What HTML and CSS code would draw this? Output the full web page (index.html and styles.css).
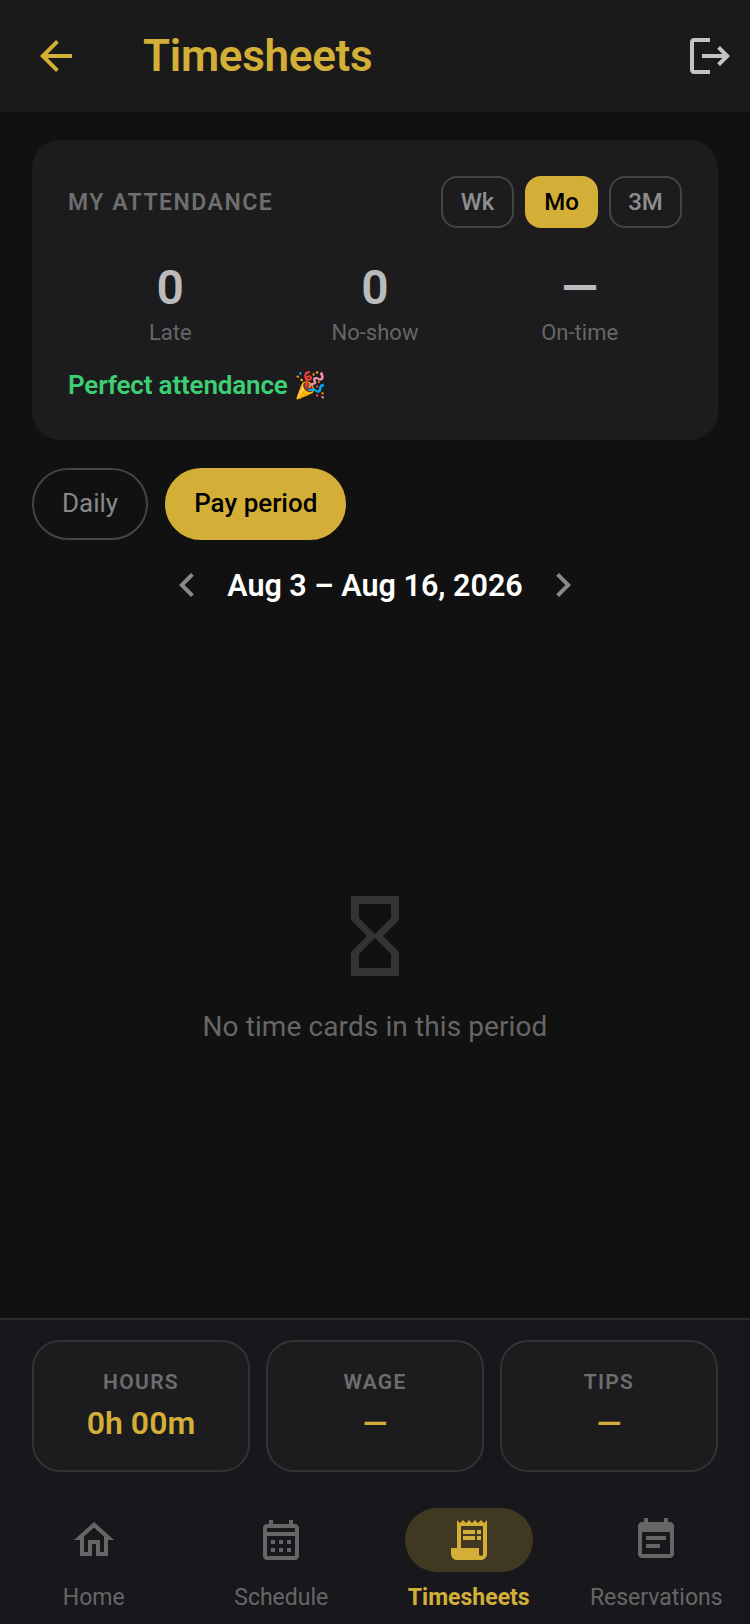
FILE: index.html
```html
<!DOCTYPE html>
<html lang="en">
<head>
<meta charset="UTF-8">
<meta name="viewport" content="width=device-width, initial-scale=1.0">
<title>Timesheets</title>
<link rel="stylesheet" href="styles.css">
</head>
<body>

<header class="topbar">
  <svg class="icon back" viewBox="0 0 24 24"><path d="M20 11H7.83l5.59-5.59L12 4l-8 8 8 8 1.41-1.41L7.83 13H20v-2z"/></svg>
  <h1 class="title">Timesheets</h1>
  <svg class="icon logout" viewBox="0 0 24 24"><path d="M17 7l-1.41 1.41L18.17 11H8v2h10.17l-2.58 2.58L17 17l5-5zM4 5h8V3H4c-1.1 0-2 .9-2 2v14c0 1.1.9 2 2 2h8v-2H4V5z"/></svg>
</header>

<main class="content">
  <section class="attendance">
    <div class="attendance-head">
      <span class="attendance-title">MY ATTENDANCE</span>
      <div class="ranges">
        <span class="range">Wk</span>
        <span class="range active">Mo</span>
        <span class="range">3M</span>
      </div>
    </div>
    <div class="stats">
      <div class="stat"><span class="stat-value">0</span><span class="stat-label">Late</span></div>
      <div class="stat"><span class="stat-value">0</span><span class="stat-label">No-show</span></div>
      <div class="stat"><span class="stat-value">—</span><span class="stat-label">On-time</span></div>
    </div>
    <p class="perfect">Perfect attendance 🎉</p>
  </section>

  <div class="modes">
    <span class="mode">Daily</span>
    <span class="mode active">Pay period</span>
  </div>

  <div class="period">
    <svg class="icon chevron" viewBox="0 0 24 24"><path d="M15.41 7.41L14 6l-6 6 6 6 1.41-1.41L10.83 12z"/></svg>
    <span class="period-label">Aug 3 – Aug 16, 2026</span>
    <svg class="icon chevron" viewBox="0 0 24 24"><path d="M10 6L8.59 7.41 13.17 12l-4.58 4.59L10 18l6-6z"/></svg>
  </div>

  <div class="empty">
    <svg class="hourglass" viewBox="0 0 24 24"><path d="M6 2v6h.01L6 8.01 10 12l-4 4 .01.01H6V22h12v-5.99h-.01L18 16l-4-4 4-3.99-.01-.01H18V2H6zm10 14.5V20H8v-3.5l4-4 4 4zm-4-5l-4-4V4h8v3.5l-4 4z"/></svg>
    <p class="empty-text">No time cards in this period</p>
  </div>
</main>

<section class="totals">
  <div class="total"><span class="total-label">HOURS</span><span class="total-value">0h 00m</span></div>
  <div class="total"><span class="total-label">WAGE</span><span class="total-value">—</span></div>
  <div class="total"><span class="total-label">TIPS</span><span class="total-value">—</span></div>
</section>

<nav class="tabs">
  <div class="tab">
    <span class="tab-icon"><svg class="icon" viewBox="0 0 24 24"><path d="M12 5.69l5 4.5V18h-2v-6H9v6H7v-7.81l5-4.5M12 3L2 12h3v8h6v-6h2v6h6v-8h3L12 3z"/></svg></span>
    <span class="tab-label">Home</span>
  </div>
  <div class="tab">
    <span class="tab-icon"><svg class="icon" viewBox="0 0 24 24"><path d="M19 4h-1V2h-2v2H8V2H6v2H5c-1.11 0-1.99.9-1.99 2L3 20c0 1.1.89 2 2 2h14c1.1 0 2-.9 2-2V6c0-1.1-.9-2-2-2zm0 16H5V10h14v10zm0-12H5V6h14v2zM9 14H7v-2h2v2zm4 0h-2v-2h2v2zm4 0h-2v-2h2v2zm-8 4H7v-2h2v2zm4 0h-2v-2h2v2zm4 0h-2v-2h2v2z"/></svg></span>
    <span class="tab-label">Schedule</span>
  </div>
  <div class="tab active">
    <span class="tab-icon"><svg class="icon" viewBox="0 0 24 24"><path fill-rule="evenodd" d="M19.5 3.5L18 2l-1.5 1.5L15 2l-1.5 1.5L12 2l-1.5 1.5L9 2 7.5 3.5 6 2v14H3v3c0 1.66 1.34 3 3 3h12c1.66 0 3-1.34 3-3V2l-1.5 1.5zM19 19c0 .55-.45 1-1 1s-1-.45-1-1v-3H8V5h11v14z"/><path d="M9 7h6v2H9zM16 7h2v2h-2zM9 10h6v2H9zM16 10h2v2h-2z"/></svg></span>
    <span class="tab-label">Timesheets</span>
  </div>
  <div class="tab">
    <span class="tab-icon"><svg class="icon" viewBox="0 0 24 24"><path d="M17 10H7v2h10v-2zm2-7h-1V1h-2v2H8V1H6v2H5c-1.11 0-1.99.9-1.99 2L3 19c0 1.1.89 2 2 2h14c1.1 0 2-.9 2-2V5c0-1.1-.9-2-2-2zm0 16H5V8h14v11zm-5-5H7v2h7v-2z"/></svg></span>
    <span class="tab-label">Reservations</span>
  </div>
</nav>

</body>
</html>
```

FILE: styles.css
```css
* {
  box-sizing: border-box;
}

html, body {
  height: 100%;
}

body {
  margin: 0;
  height: 1624px;
  display: flex;
  flex-direction: column;
  background: #111111;
  color: #fff;
  font-family: Roboto, 'Noto Sans', sans-serif;
  overflow: hidden;
}

.icon {
  width: 48px;
  height: 48px;
  fill: currentColor;
  flex: none;
  display: block;
}

/* Top bar */
.topbar {
  height: 112px;
  flex: none;
  display: flex;
  align-items: center;
  padding: 0 16px 0 32px;
  background: #1a1a1a;
}

.back {
  color: #d4af37;
}

.logout {
  color: #c4c4c4;
}

.title {
  flex: 1;
  margin: 0 0 0 63px;
  font-size: 44px;
  font-weight: 600;
  letter-spacing: -0.3px;
  color: #d4af37;
}

/* Main */
.content {
  flex: 1;
  min-height: 0;
  display: flex;
  flex-direction: column;
  padding: 28px 32px 0;
}

.attendance {
  height: 300px;
  flex: none;
  padding: 36px 36px 0;
  background: #1c1c1e;
  border-radius: 28px;
}

.attendance-head {
  display: flex;
  align-items: center;
  justify-content: space-between;
}

.attendance-title {
  padding-top: 1px;
  font-size: 23px;
  font-weight: 600;
  letter-spacing: 1.5px;
  color: #6e6e6e;
}

.ranges {
  display: flex;
  gap: 11px;
}

.range {
  width: 73px;
  height: 52px;
  display: flex;
  align-items: center;
  justify-content: center;
  border: 2px solid #444;
  border-radius: 16px;
  font-size: 24px;
  font-weight: 500;
  color: #8e8e8e;
}

.range.active {
  background: #d4af37;
  border-color: #d4af37;
  color: #000;
}

.stats {
  display: grid;
  grid-template-columns: repeat(3, 1fr);
  margin-top: 32px;
}

.stat {
  display: flex;
  flex-direction: column;
  align-items: center;
}

.stat-value {
  font-size: 48px;
  line-height: 56px;
  font-weight: 600;
  color: #bbb;
}

.stat-label {
  margin-top: 3px;
  font-size: 22px;
  line-height: 28px;
  color: #666;
}

.perfect {
  margin: 22px 0 0;
  font-size: 26px;
  line-height: 32px;
  font-weight: 600;
  letter-spacing: -0.15px;
  color: #3ecf74;
}

.modes {
  display: flex;
  gap: 17px;
  margin-top: 28px;
}

.mode {
  height: 72px;
  padding: 0 28px 2px;
  display: flex;
  align-items: center;
  border: 2px solid #444;
  border-radius: 36px;
  font-size: 26px;
  font-weight: 400;
  color: #888;
}

.mode.active {
  padding: 0 27px 2px;
  background: #d4af37;
  border-color: #d4af37;
  font-weight: 500;
  color: #000;
}

.period {
  display: flex;
  align-items: center;
  justify-content: center;
  gap: 16px;
  margin-top: 21px;
}

.chevron {
  color: #888;
}

.period-label {
  font-size: 30.5px;
  font-weight: 600;
  color: #fff;
}

.empty {
  flex: 1;
  display: flex;
  flex-direction: column;
  align-items: center;
  justify-content: center;
  padding-top: 5px;
}

.hourglass {
  width: 96px;
  height: 96px;
  fill: #333;
}

.empty-text {
  margin: 26px 0 0;
  font-size: 28px;
  line-height: 34px;
  letter-spacing: 0.1px;
  color: #666;
}

/* Totals */
.totals {
  flex: none;
  display: grid;
  grid-template-columns: repeat(3, 1fr);
  gap: 16px;
  padding: 20px 32px 0;
  background: #18181c;
  border-top: 2px solid #2c2c30;
}

.total {
  height: 132px;
  display: flex;
  flex-direction: column;
  align-items: center;
  justify-content: center;
  gap: 8px;
  padding-bottom: 3px;
  background: #1c1c1e;
  border: 2px solid #333;
  border-radius: 28px;
}

.total-label {
  font-size: 21px;
  line-height: 28px;
  font-weight: 600;
  letter-spacing: 1.3px;
  color: #6e6e6e;
}

.total-value {
  font-size: 32px;
  line-height: 38px;
  font-weight: 600;
  color: #d4af37;
}

/* Bottom nav */
.tabs {
  height: 152px;
  flex: none;
  display: grid;
  grid-template-columns: repeat(4, 1fr);
  padding-top: 36px;
  background: #18181c;
}

.tab {
  display: flex;
  flex-direction: column;
  align-items: center;
  color: #666;
}

.tab-icon {
  width: 128px;
  height: 64px;
  display: flex;
  align-items: center;
  justify-content: center;
  border-radius: 32px;
}

.tab-label {
  margin-top: 10px;
  font-size: 23px;
  line-height: 32px;
  font-weight: 400;
}

.tab.active {
  color: #d4af37;
}

.tab.active .tab-icon {
  background: rgba(212, 175, 55, 0.22);
}

.tab.active .tab-label {
  font-weight: 700;
}
```
